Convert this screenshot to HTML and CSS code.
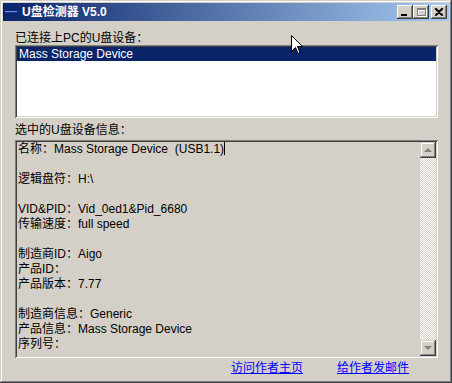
FILE: index.html
```html
<!DOCTYPE html>
<html lang="zh-CN">
<head>
  <meta charset="UTF-8">
  <title>U盘检测器 V5.0</title>
  <link rel="stylesheet" href="styles.css">
</head>
<body>
  <div class="window">
    <div class="titlebar">
      <svg class="app-icon" width="16" height="16" viewBox="0 0 16 16">
        <rect x="1" y="7" width="12" height="1" fill="#6c8ee0"/>
        <rect x="1" y="8" width="12" height="1" fill="#1d3c9a"/>
      </svg>
      <span class="title">U盘检测器 V5.0</span>
      <div class="title-buttons">
        <div class="tbtn">
          <svg width="16" height="14" viewBox="0 0 16 14"><rect x="4" y="9" width="6" height="2" fill="#000"/></svg>
        </div>
        <div class="tbtn">
          <svg width="16" height="14" viewBox="0 0 16 14">
            <path d="M4 3h9v8H4z M5 5h7v5H5z" fill="#fff" fill-rule="evenodd" transform="translate(1 1)"/>
            <path d="M4 3h9v8H4z M5 5h7v5H5z" fill="#808080" fill-rule="evenodd"/>
          </svg>
        </div>
        <div class="tbtn close">
          <svg width="16" height="14" viewBox="0 0 16 14"><path d="M4 3.5l7 7M5 3.5l7 7M11 3.5l-7 7M12 3.5l-7 7" stroke="#000" stroke-width="1.2"/></svg>
        </div>
      </div>
    </div>

    <div class="content">
      <div class="label">已连接上PC的U盘设备：</div>
      <div class="listbox">
        <div class="list-item selected">Mass Storage Device</div>
      </div>

      <div class="label second">选中的U盘设备信息：</div>
      <div class="infobox">
        <div class="info-text">
<div class="line">名称：Mass Storage Device  (USB1.1)<span class="caret"></span></div>
<div class="line"> </div>
<div class="line">逻辑盘符：H:\</div>
<div class="line"> </div>
<div class="line">VID&amp;PID：Vid_0ed1&amp;Pid_6680</div>
<div class="line">传输速度：full speed</div>
<div class="line"> </div>
<div class="line">制造商ID：Aigo</div>
<div class="line">产品ID：</div>
<div class="line">产品版本：7.77</div>
<div class="line"> </div>
<div class="line">制造商信息：Generic</div>
<div class="line">产品信息：Mass Storage Device</div>
<div class="line">序列号：</div>
        </div>
        <div class="scrollbar">
          <div class="sbtn"><span class="arrow up"></span></div>
          <div class="track"></div>
          <div class="sbtn"><span class="arrow down"></span></div>
        </div>
      </div>

      <div class="links">
        <a href="#">访问作者主页</a>
        <a href="#">给作者发邮件</a>
      </div>
    </div>

    <svg class="pointer" width="13" height="21" viewBox="0 0 13 21">
      <path d="M0.5 0.5V16.5L4.5 12.5L7 18.5L9 17.5L6.5 11.5H11.5Z" fill="#fff" stroke="#000" stroke-width="1"/>
    </svg>
  </div>
</body>
</html>
```

FILE: styles.css
```css
body {
  margin: 0;
  background-color: #d4d0c8;
  font-family: "Liberation Sans", "Noto Sans CJK SC", sans-serif;
  font-size: 12px;
  color: #000;
}

.window {
  position: relative;
  width: 452px;
  height: 383px;
  box-sizing: border-box;
  padding: 3px;
  background-color: #d4d0c8;
  box-shadow: inset -1px -1px #404040, inset 1px 1px #d4d0c8,
              inset -2px -2px #808080, inset 2px 2px #fff;
}

/* title bar */
.titlebar {
  height: 18px;
  display: flex;
  align-items: center;
  padding: 0 2px 0 1px;
  background: linear-gradient(to right, #0a246a, #a6caf0);
}

.app-icon {
  flex: none;
  margin-right: 2px;
}

.title {
  color: #fff;
  font-weight: bold;
  font-size: 12px;
  line-height: 14px;
}

.title-buttons {
  margin-left: auto;
  display: flex;
}

.tbtn {
  width: 16px;
  height: 14px;
  background-color: #d4d0c8;
  box-shadow: inset -1px -1px #404040, inset 1px 1px #fff,
              inset -2px -2px #808080, inset 2px 2px #d4d0c8;
}

.tbtn svg {
  display: block;
}

.tbtn.close {
  margin-left: 2px;
}

/* body */
.content {
  padding: 0 11px 0 12px;
}

.label {
  margin-top: 10px;
  line-height: 14px;
  height: 14px;
}

.label.second {
  margin-top: 5px;
}

.listbox {
  height: 73px;
  box-sizing: border-box;
  padding: 2px;
  background-color: #fff;
  box-shadow: inset 1px 1px #808080, inset -1px -1px #fff,
              inset 2px 2px #404040, inset -2px -2px #d4d0c8;
}

.list-item {
  height: 14px;
  line-height: 14px;
  padding-left: 2px;
}

.list-item.selected {
  background-color: #0a246a;
  color: #fff;
}

.infobox {
  margin-top: 3px;
  height: 218px;
  box-sizing: border-box;
  padding: 2px;
  display: flex;
  background-color: #d4d0c8;
  box-shadow: inset 1px 1px #808080, inset -1px -1px #fff,
              inset 2px 2px #404040, inset -2px -2px #d4d0c8;
}

.info-text {
  flex: 1;
  padding-left: 1px;
  white-space: normal;
}

.line {
  height: 15px;
  line-height: 14px;
  white-space: pre;
}

.caret {
  display: inline-block;
  width: 0;
  height: 13px;
  border-left: 1px solid #000;
  vertical-align: -2px;
}

.scrollbar {
  width: 16px;
  display: flex;
  flex-direction: column;
}

.sbtn {
  width: 16px;
  height: 16px;
  display: flex;
  align-items: center;
  justify-content: center;
  background-color: #d4d0c8;
  box-shadow: inset -1px -1px #404040, inset 1px 1px #d4d0c8,
              inset -2px -2px #808080, inset 2px 2px #fff;
}

.track {
  flex: 1;
  background: repeating-conic-gradient(#d4d0c8 0 25%, #fff 0 50%) 0 0 / 2px 2px;
}

.arrow {
  width: 0;
  height: 0;
  border-left: 4px solid transparent;
  border-right: 4px solid transparent;
}

.arrow.up {
  border-bottom: 4px solid #808080;
}

.arrow.down {
  border-top: 4px solid #808080;
}

.links {
  margin-top: 3px;
  padding-left: 216px;
  display: flex;
  gap: 34px;
  line-height: 15px;
}

.links a {
  color: #0000ff;
  text-decoration: underline;
}

/* mouse pointer over the dialog */
.pointer {
  position: absolute;
  left: 291px;
  top: 35px;
}
```
